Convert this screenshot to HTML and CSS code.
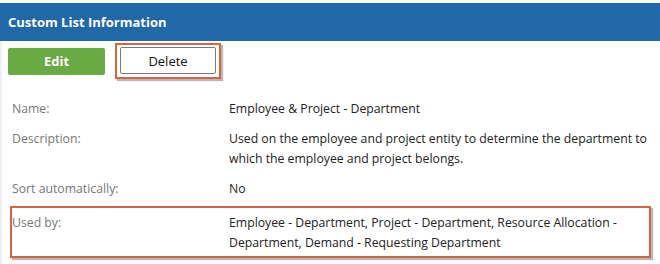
FILE: index.html
```html
<!DOCTYPE html>
<html lang="en">
<head>
    <meta charset="UTF-8">
    <title>Custom List Information</title>
    <link rel="stylesheet" href="styles.css">
</head>
<body>
    <div class="panel">
        <div class="panel-header">Custom List Information</div>
        <div class="panel-body">
            <div class="toolbar">
                <button class="btn btn-edit">Edit</button>
                <span class="mark mark-button">
                    <button class="btn btn-delete">Delete</button>
                </span>
            </div>

            <div class="details">
                <div class="row">
                    <div class="label">Name:</div>
                    <div class="value">Employee &amp; Project - Department</div>
                </div>
                <div class="row">
                    <div class="label">Description:</div>
                    <div class="value">Used on the employee and project entity to determine the department to which the employee and project belongs.</div>
                </div>
                <div class="row">
                    <div class="label">Sort automatically:</div>
                    <div class="value">No</div>
                </div>
                <div class="row mark mark-row">
                    <div class="label">Used by:</div>
                    <div class="value">Employee - Department, Project - Department, Resource Allocation - Department, Demand - Requesting Department</div>
                </div>
            </div>
        </div>
    </div>
</body>
</html>
```

FILE: styles.css
```css
body {
    margin: 0;
    padding-top: 3px;
    background-color: #fff;
    font-family: 'Open Sans', 'Noto Sans', sans-serif;
    font-size: 12.25px;
    color: #222;
}

.panel-header {
    height: 38px;
    line-height: 39px;
    padding-left: 8px;
    background-color: #2068a8;
    color: #fff;
    font-weight: bold;
    font-size: 13px;
}

.panel-body {
    border-left: 2px solid #f1f1f1;
    padding: 2px 6px 8px 6px;
}

.toolbar {
    display: flex;
    align-items: center;
    gap: 10px;
}

.btn {
    height: 27px;
    font-family: inherit;
    font-size: 13px;
    border-radius: 2px;
    cursor: pointer;
}

.btn-edit {
    width: 97px;
    background-color: #69aa45;
    border: none;
    color: #fff;
    font-weight: bold;
}

.btn-delete {
    display: block;
    width: 96px;
    background-color: #fff;
    border: 1px solid #7a7a7a;
    color: #111;
}

.mark {
    border: 2px solid #d8643f;
    box-shadow: 2px 2px 1px #b8b8b8;
}

.mark-button {
    display: block;
    padding: 2px 3px 3px 3px;
}

.details {
    margin-top: 15px;
    padding-left: 4px;
    line-height: 20px;
}

.row {
    display: grid;
    grid-template-columns: 217px 1fr;
    padding: 5px 0;
}

.label {
    color: #777;
}

.mark-row {
    margin: 2px 3px 0 -2px;
    padding: 5px 0 3px 0;
}
```
